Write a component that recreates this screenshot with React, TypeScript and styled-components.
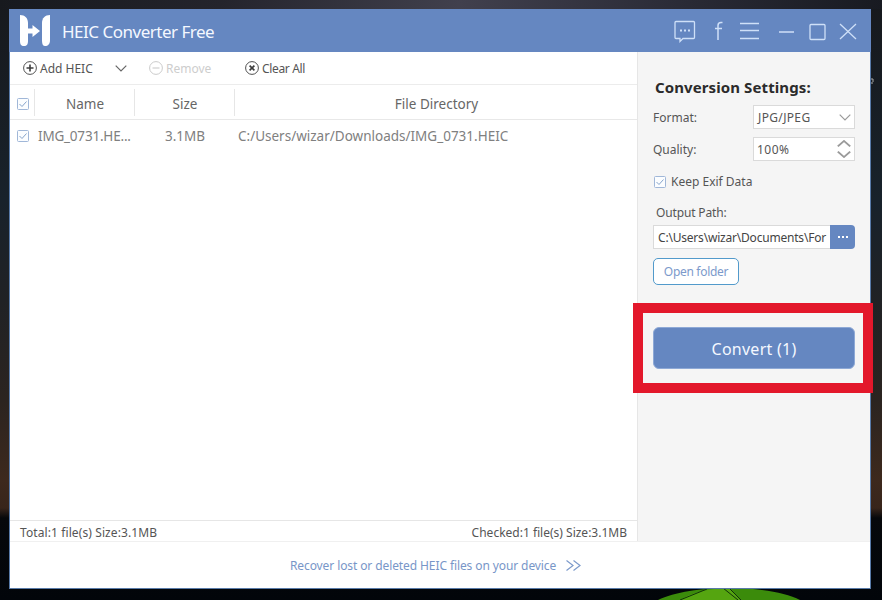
import React from 'react';
import styled, { createGlobalStyle } from 'styled-components';

const Global = createGlobalStyle`
  * { box-sizing: border-box; }
  body { margin: 0; overflow: hidden; font-family: "Noto Sans", "Open Sans", sans-serif; }
  button { font-family: inherit; padding: 0; border: 0; background: none; }
`;

const Desktop = styled.div`
  position: relative;
  width: 882px;
  height: 600px;
  padding: 9px 11px 11px 9px;
  overflow: hidden;
  background:
    linear-gradient(100deg, #17191e 0%, #24242c 25%, #41404d 52%, #292a35 78%, #181a21 100%) 0 0 / 100% 9px no-repeat,
    linear-gradient(#17191d 0, #18222b 200px, #202225 300px, #2b2420 400px, #3d291d 480px, #38251b 508px, #06080b 518px, #02050a 600px);
`;

const Wallpaper = styled.svg`
  position: absolute;
  left: 0;
  top: 0;
`;

const Window = styled.main`
  position: relative;
  width: 862px;
  height: 580px;
  border: 1px solid #587aa8;
  border-top: 0;
  background: #fff;
  display: flex;
  flex-direction: column;
`;

const TitleBar = styled.header`
  height: 43px;
  margin: 0 -1px;
  background: #6587c1;
  display: flex;
  align-items: center;
  padding: 0 14px 0 11px;
`;

const Label = styled.span<{ $size?: number; $color?: string; $gap?: number; $weight?: number }>`
  font-size: ${p => p.$size ?? 12}px;
  color: ${p => p.$color ?? '#555'};
  letter-spacing: ${p => p.$gap ?? 0}px;
  font-weight: ${p => p.$weight ?? 400};
  line-height: 20px;
  white-space: nowrap;
`;

const AppName = styled(Label)`
  flex: 1;
  margin-left: 11px;
  margin-top: 2px;
`;

const Body = styled.div`
  height: 490px;
  display: flex;
  border-bottom: 1px solid #f0f0f0;
`;

const Files = styled.section`
  width: 627px;
  display: flex;
  flex-direction: column;
`;

const Toolbar = styled.div`
  height: 33px;
  display: flex;
  align-items: center;
  padding-left: 13px;
  border-bottom: 1px solid #ececec;
`;

const Tool = styled.button<{ $width: number }>`
  width: ${p => p.$width}px;
  display: flex;
  align-items: center;
  gap: 3px;
  & > span { margin-top: 2px; }
`;

const Caret = styled.button`
  width: 34px;
  display: flex;
`;

const HeadRow = styled.div`
  height: 35px;
  display: grid;
  grid-template-columns: 24px 100px 100px 1fr;
  align-items: center;
  border-bottom: 1px solid #e8e8e8;
`;

const HeadCell = styled.div`
  height: 27px;
  border-left: 1px solid #e6e6e6;
  padding: 3px 0 0 1px;
  display: flex;
  justify-content: center;
  align-items: center;
`;

const CheckCell = styled.div<{ $drop?: number }>`
  display: flex;
  padding: ${p => p.$drop ?? 0}px 0 0 7px;
`;

const FileRow = styled.div`
  height: 32px;
  display: grid;
  grid-template-columns: 28px 97px 100px 1fr;
  align-items: center;
`;

const Cell = styled.div<{ $center?: boolean; $pad?: number }>`
  display: flex;
  justify-content: ${p => (p.$center ? 'center' : 'flex-start')};
  padding-left: ${p => p.$pad ?? 0}px;
`;

const Status = styled.div`
  height: 21px;
  margin-top: auto;
  border-top: 1px solid #e6e6e6;
  padding: 3px 10px 0 10px;
  display: flex;
  justify-content: space-between;
  align-items: center;
`;

const Settings = styled.aside`
  flex: 1;
  background: #f5f5f5;
  border-left: 1px solid #e6e6e6;
  padding: 25px 15px 0 15px;
  display: flex;
  flex-direction: column;
`;

const Heading = styled.h2`
  margin: 0 0 8px 2px;
  height: 20px;
  display: flex;
`;

const Field = styled.div`
  height: 24px;
  margin-bottom: 7.5px;
  display: flex;
  align-items: center;
  justify-content: space-between;
  & span { margin-top: 2px; }
`;

const Control = styled.div<{ $pad?: number }>`
  width: 102px;
  height: 24px;
  background: #fff;
  border: 1px solid #dadada;
  padding: 0 3px 0 ${p => p.$pad ?? 4}px;
  display: flex;
  align-items: center;
  justify-content: space-between;
`;

const Option = styled.label`
  height: 20px;
  margin: 4px 0 0 1px;
  display: flex;
  align-items: center;
  gap: 5px;
`;

const PathLabel = styled.div`
  height: 20px;
  margin: 11px 0 2px 3px;
  display: flex;
`;

const PathRow = styled.div`
  height: 24px;
  display: flex;
`;

const PathBox = styled.div`
  width: 177px;
  height: 24px;
  background: #fff;
  border: 1px solid #dadada;
  border-right: 0;
  padding: 1px 0 0 4px;
  display: flex;
  align-items: center;
`;

const Browse = styled.button`
  width: 25px;
  height: 24px;
  background: #6587c1;
  border-radius: 0 4px 4px 0;
  display: flex;
  align-items: center;
  justify-content: center;
`;

const OpenFolder = styled.button`
  width: 86px;
  height: 27px;
  margin-top: 9px;
  padding-top: 1px;
  background: #fff;
  border: 1px solid #529acb;
  border-radius: 5px;
  display: flex;
  align-items: center;
  justify-content: center;
`;

const Convert = styled.button`
  width: 202px;
  height: 42px;
  margin-top: 42px;
  padding-top: 1px;
  flex: none;
  background: #6587c1;
  border: 1px solid #8ea9d6;
  border-radius: 6px;
  display: flex;
  align-items: center;
  justify-content: center;
`;

const Highlight = styled.div`
  position: absolute;
  left: 633px;
  top: 303px;
  width: 240px;
  height: 90px;
  border: 10px solid #e3182b;
`;

const Footer = styled.footer`
  flex: 1;
  display: flex;
  align-items: center;
  gap: 10px;
  padding-left: 280px;
  & > span { margin-top: 2px; }
`;

const Logo = () => (
  <svg width="31" height="33" viewBox="0 0 31 33" fill="#fff">
    <path d="M0 1C5 1 8 4 8 9v5.500h4.500V11l7.500 6-7.500 6v-3.500H8V27c0 3-1 5-4 5s-4-2-4-5z" />
    <path d="M30 1c-5 0-8 3-8 8v18c0 3 1 5 3 5 3 0 5-2 5-6z" />
  </svg>
);

const WindowIcons = () => (
  <svg width="184" height="26" viewBox="0 0 184 26" fill="none" stroke="#cfe0f8" strokeWidth="1.3">
    <path d="M3 3.500h17.500q1 0 1 1v15q0 1-1 1H10l-3 3v-3H3q-1 0-1-1v-15q0-1 1-1z" />
    <path d="M7 12.500h2M11 12.500h2M15 12.500h2" strokeWidth="2" />
    <path d="M49.500 4.500h-1.500q-3 0-3 3V22M42 10.500h7" strokeWidth="1.500" />
    <path d="M67 5.500h19M67 12.500h19M67 20.500h19M106 14h15" />
    <rect x="137" y="6.500" width="15" height="15" rx="1" />
    <path d="M167 6l16 15M183 6l-16 15" />
  </svg>
);

const RingIcon = ({ kind }: { kind: 'plus' | 'minus' | 'cross' }) => {
  const color = kind === 'minus' ? '#c5c5c5' : '#3c3c3c';
  const marks = { plus: 'M7 3.500v7M3.500 7h7', minus: 'M3.500 7h7', cross: 'M4.600 4.600l4.800 4.800M9.400 4.600l-4.800 4.800' };
  return (
    <svg width="14" height="14" viewBox="0 0 14 14" fill="none" stroke={color}>
      <circle cx="7" cy="7" r="6.400" strokeWidth="0.900" />
      <path d={marks[kind]} strokeWidth={kind === 'minus' ? 1 : 1.600} />
    </svg>
  );
};

const Check = () => (
  <svg width="12" height="12" viewBox="0 0 12 12" fill="none">
    <rect x="0.500" y="0.500" width="11" height="11" rx="1" fill="#fbfdff" stroke="#a0b7d8" />
    <path d="M2.500 6l2.500 2.500 4.500-5" stroke="#86a4cb" />
  </svg>
);

const Chevron = ({ color = '#9a9a9a', up = false, width = 12 }: { color?: string; up?: boolean; width?: number }) => (
  <svg width={width} height="7" viewBox="0 0 12 7" preserveAspectRatio="none" fill="none" stroke={color} strokeWidth={width > 12 ? 1.700 : 1.200}>
    <path d={up ? 'M.7 6.300L6 1l5.300 5.300' : 'M.7 .7L6 6l5.300-5.300'} />
  </svg>
);

const Spinner = styled.div`
  display: flex;
  flex-direction: column;
  gap: 4px;
`;

export default function App() {
  return (
    <>
      <Global />
      <Desktop>
        <Wallpaper width="882" height="600">
          <path d="M658 600C690 584 770 584 800 600z" fill="#3b8b0b" />
          <path d="M680 600q20-12 50-12l10 12z" fill="#55a510" />
          <path d="M680 600l27-11M723 588l15 12M729 588l12 12" stroke="#11330a" fill="none" />
          <path d="M870 79h3v3M871 83h2" stroke="#aaa" fill="none" />
        </Wallpaper>
        <Window>
          <TitleBar>
            <Logo />
            <AppName $size={17} $color="#f4f8ff" $gap={-0.5}>HEIC Converter Free</AppName>
            <WindowIcons />
          </TitleBar>
          <Body>
            <Files>
              <Toolbar>
                <Tool $width={92}><RingIcon kind="plus" /><Label>Add HEIC</Label></Tool>
                <Caret><Chevron color="#666" /></Caret>
                <Tool $width={96}><RingIcon kind="minus" /><Label $color="#cdcdcd">Remove</Label></Tool>
                <Tool $width={70}><RingIcon kind="cross" /><Label $gap={-0.35}>Clear All</Label></Tool>
              </Toolbar>
              <HeadRow>
                <CheckCell $drop={3}><Check /></CheckCell>
                <HeadCell><Label $size={13.5} $color="#666">Name</Label></HeadCell>
                <HeadCell><Label $size={13.5} $color="#666">Size</Label></HeadCell>
                <HeadCell><Label $size={13.5} $color="#666">File Directory</Label></HeadCell>
              </HeadRow>
              <FileRow>
                <CheckCell><Check /></CheckCell>
                <Cell><Label $size={13.5} $color="#808080" $gap={-0.2}>IMG_0731.HE...</Label></Cell>
                <Cell $center><Label $size={13.5} $color="#808080">3.1MB</Label></Cell>
                <Cell $pad={3}><Label $size={13.5} $color="#808080">C:/Users/wizar/Downloads/IMG_0731.HEIC</Label></Cell>
              </FileRow>
              <Status>
                <Label $gap={0.1}>Total:1 file(s) Size:3.1MB</Label>
                <Label>Checked:1 file(s) Size:3.1MB</Label>
              </Status>
            </Files>
            <Settings>
              <Heading><Label $size={15} $weight={700} $color="#2b2b2b" $gap={0.1}>Conversion Settings:</Label></Heading>
              <Field>
                <Label>Format:</Label>
                <Control><Label $gap={0.35}>JPG/JPEG</Label><Chevron /></Control>
              </Field>
              <Field>
                <Label>Quality:</Label>
                <Control $pad={3}><Label $gap={0.5}>100%</Label><Spinner><Chevron up width={14} /><Chevron width={14} /></Spinner></Control>
              </Field>
              <Option><Check /><Label>Keep Exif Data</Label></Option>
              <PathLabel><Label $gap={-0.15}>Output Path:</Label></PathLabel>
              <PathRow>
                <PathBox><Label $color="#444" $gap={-0.2}>C:\Users\wizar\Documents\For</Label></PathBox>
                <Browse>
                  <svg width="10" height="2" viewBox="0 0 10 2" fill="#fff"><path d="M0 0h2v2H0zM4 0h2v2H4zM8 0h2v2H8z" /></svg>
                </Browse>
              </PathRow>
              <OpenFolder><Label $color="#7c9acb" $gap={-0.3}>Open folder</Label></OpenFolder>
              <Convert><Label $size={16} $color="#f4f8ff" $gap={0.25}>Convert (1)</Label></Convert>
            </Settings>
          </Body>
          <Footer>
            <Label $color="#7896c8" $gap={-0.1}>Recover lost or deleted HEIC files on your device</Label>
            <svg width="15" height="11" viewBox="0 0 15 11" fill="none" stroke="#7c9acb" strokeWidth="1.200">
              <path d="M.5 .5L7 5.500L.5 10.500M7.500 .5L14 5.500L7.500 10.500" />
            </svg>
          </Footer>
        </Window>
        <Highlight />
      </Desktop>
    </>
  );
}
